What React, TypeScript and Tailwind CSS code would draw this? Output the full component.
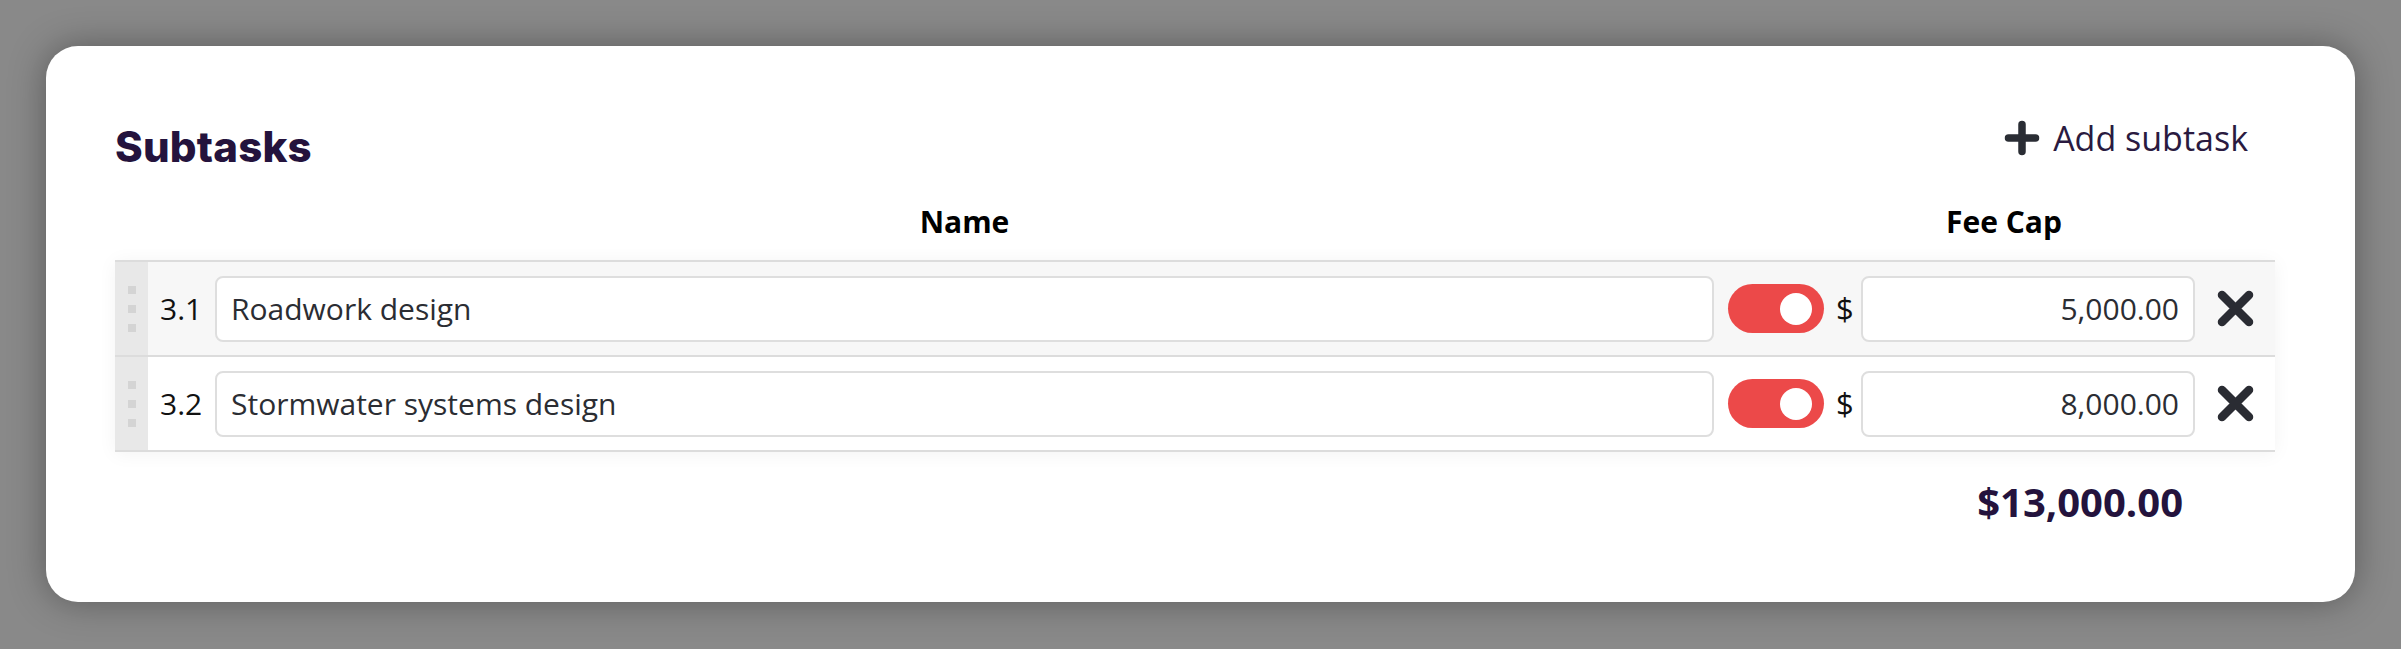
import React from 'react';

type Subtask = { id: string; name: string; fee: string; enabled: boolean };

const subtasks: Subtask[] = [
  { id: '3.1', name: 'Roadwork design', fee: '5,000.00', enabled: true },
  { id: '3.2', name: 'Stormwater systems design', fee: '8,000.00', enabled: true },
];

const PlusIcon = () => (
  <svg width="36" height="36" viewBox="0 0 36 36" className="shrink-0">
    <path d="M18 4.5V31.5M4.5 18H31.5" stroke="#2a2d34" strokeWidth="7.5" strokeLinecap="round" />
  </svg>
);

const CloseIcon = () => (
  <svg width="37" height="37" viewBox="0 0 37 37">
    <path d="M5 5L32 32M32 5L5 32" stroke="#2a2c33" strokeWidth="8.5" strokeLinecap="round" />
  </svg>
);

const Toggle = ({ on }: { on: boolean }) => (
  <div className={`flex h-[49px] w-[96px] shrink-0 items-center rounded-full pr-[12px] ${on ? 'justify-end bg-[#ec4949]' : 'justify-start bg-gray-300 pl-[12px]'}`}>
    <div className="h-[32px] w-[32px] rounded-full bg-white" />
  </div>
);

const DragHandle = () => (
  <div className="flex w-[33px] shrink-0 flex-col items-center justify-center gap-[11px] self-stretch bg-[#e8e8e8]">
    <div className="h-[8px] w-[8px] bg-[#d4d4d4]" />
    <div className="h-[8px] w-[8px] bg-[#d4d4d4]" />
    <div className="h-[8px] w-[8px] bg-[#d4d4d4]" />
  </div>
);

const SubtaskRow = ({ task, striped }: { task: Subtask; striped: boolean }) => (
  <div className={`flex h-[95px] items-center border-t-2 border-[#dcdcdc] ${striped ? 'bg-[#f7f7f7]' : 'bg-white'}`}>
    <DragHandle />
    <div className="w-[67px] shrink-0 pl-[12px] text-[30px] text-[#111]">{task.id}</div>
    <div className="flex h-[66px] flex-1 items-center rounded-[8px] border-2 border-[#dedede] bg-white pl-[14px] text-[30px] text-[#2b2d33]">
      {task.name}
    </div>
    <div className="ml-[14px]">
      <Toggle on={task.enabled} />
    </div>
    <div className="ml-[12px] w-[17px] text-[31px] text-[#111]">$</div>
    <div className="ml-[8px] flex h-[66px] w-[334px] items-center justify-end rounded-[8px] border-2 border-[#dedede] bg-white pr-[14px] text-[30px] text-[#2b2d33]">
      {task.fee}
    </div>
    <button className="ml-[22px] mr-[21px] flex h-[37px] w-[37px] items-center justify-center">
      <CloseIcon />
    </button>
  </div>
);

export default function App() {
  const total = '$13,000.00';

  return (
    <div className="h-[649px] w-full overflow-hidden bg-[#898989] px-[46px] pt-[46px] font-['Open_Sans',sans-serif]">
      <div className="h-[556px] w-full rounded-[32px] bg-white pl-[69px] pr-[80px] pt-[66px] shadow-[0_0_36px_rgba(0,0,0,0.35)]">
        {/* Header */}
        <div className="flex h-[64px] items-start justify-between">
          <h2 className="pt-[3px] font-['Inter',sans-serif] text-[42px] font-extrabold leading-[64px] tracking-[0.2px] text-[#24133d]">Subtasks</h2>
          <button className="mr-[27px] flex h-[52px] items-center gap-[13px] text-[34px] leading-[52px] text-[#2a1a40]">
            <PlusIcon />
            <span>Add subtask</span>
          </button>
        </div>

        {/* Column headers */}
        <div className="flex h-[84px] items-end text-[30px] font-bold text-black">
          <div className="w-[100px] shrink-0" />
          <div className="flex-1 text-center leading-[76px]">Name</div>
          <div className="w-[123px] shrink-0" />
          <div className="w-[334px] shrink-0 text-center leading-[76px]">Fee Cap</div>
          <div className="w-[104px] shrink-0" />
        </div>

        {/* Rows */}
        <div className="border-b-2 border-[#dcdcdc] shadow-[0_2px_18px_rgba(0,0,0,0.05)]">
          {subtasks.map((t, i) => (
            <SubtaskRow key={t.id} task={t} striped={i % 2 === 0} />
          ))}
        </div>

        {/* Total */}
        <div className="flex h-[100px] items-center justify-end pr-[92px] text-[40px] font-bold text-[#24133d]">
          {total}
        </div>
      </div>
    </div>
  );
}
